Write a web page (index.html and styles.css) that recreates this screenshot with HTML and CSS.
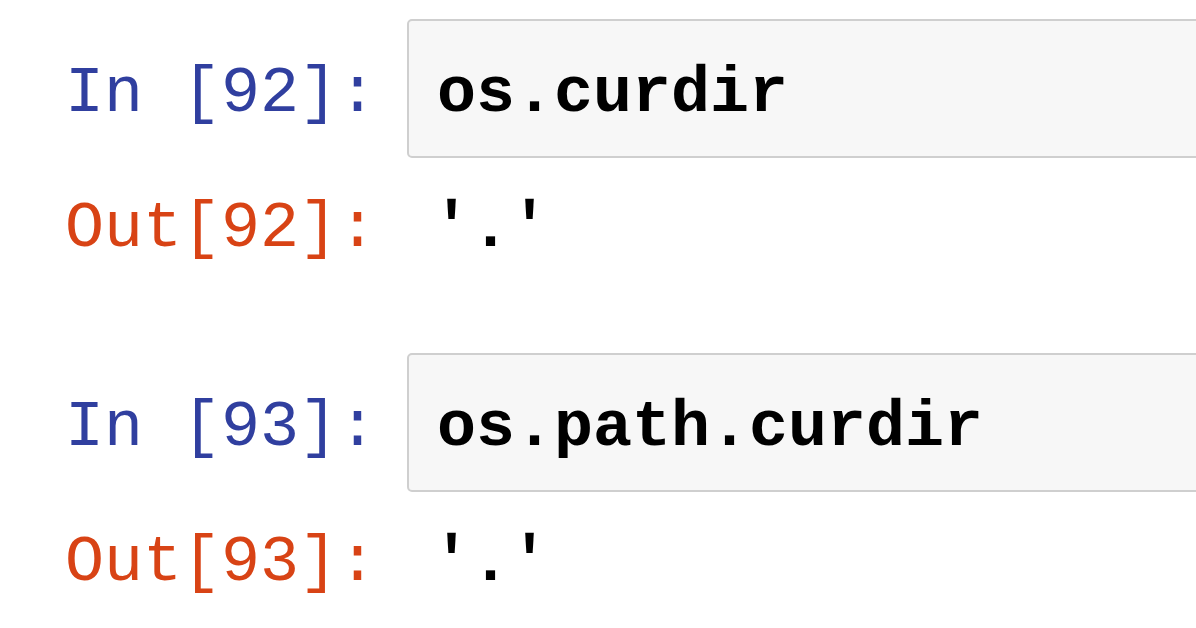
FILE: index.html
```html
<!DOCTYPE html>
<html lang="en">
<head>
<meta charset="utf-8">
<title>Notebook</title>
<link rel="stylesheet" href="styles.css">
</head>
<body>
<div class="notebook">
  <div class="cell">
    <div class="row input-row">
      <div class="prompt in-prompt">In&nbsp;[92]:</div>
      <div class="input-area"><span class="code">os.curdir</span></div>
    </div>
    <div class="row output-row">
      <div class="prompt out-prompt">Out[92]:</div>
      <div class="output-area">'.'</div>
    </div>
  </div>
  <div class="cell">
    <div class="row input-row">
      <div class="prompt in-prompt">In&nbsp;[93]:</div>
      <div class="input-area"><span class="code">os.path.curdir</span></div>
    </div>
    <div class="row output-row">
      <div class="prompt out-prompt">Out[93]:</div>
      <div class="output-area">'.'</div>
    </div>
  </div>
</div>
</body>
</html>
```

FILE: styles.css
```css
html, body {
  margin: 0;
  padding: 0;
  background: #ffffff;
  overflow: hidden;
}

.notebook {
  padding-top: 19px;
  font-family: "Liberation Mono", "Courier New", monospace;
  font-size: 65px;
  line-height: 80px;
}

.cell {
  display: flex;
  flex-direction: column;
  margin-bottom: 84px;
}

.row {
  display: flex;
  align-items: baseline;
}

.prompt {
  flex: 0 0 407px;
  box-sizing: border-box;
  padding-right: 30px;
  text-align: right;
  white-space: nowrap;
}

.in-prompt {
  color: #303f9f;
}

.out-prompt {
  color: #d84315;
}

.input-area {
  flex: 1;
  margin-right: -40px;
  background: #f7f7f7;
  border: 2px solid #cfcfcf;
  border-radius: 5px;
  padding: 33px 0 22px 28px;
  color: #000;
}

.code {
  font-weight: bold;
  white-space: pre;
}

.output-row {
  margin-top: 31px;
}

.output-area {
  flex: 1;
  padding-left: 25px;
  color: #000;
  font-weight: bold;
  white-space: pre;
}
```
